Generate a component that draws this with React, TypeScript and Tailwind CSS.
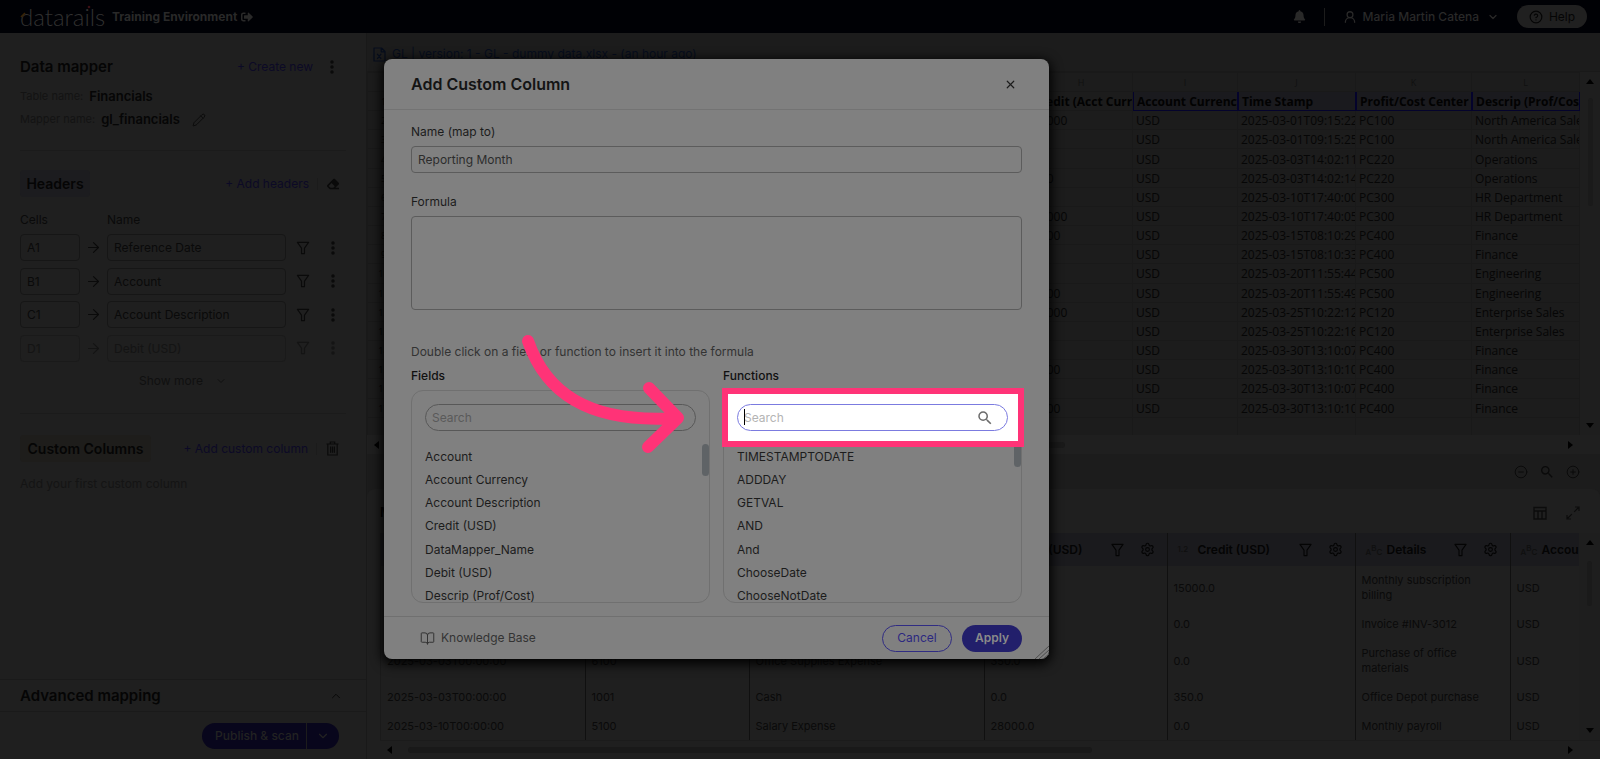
import React from "react";
import {
  ArrowRight,
  BookOpen,
  ChevronDown,
  ChevronUp,
  CircleHelp,
  CircleMinus,
  CirclePlus,
  Pencil,
  Settings,
  UserRound,
  X,
} from "lucide-react";
import { FaBell, FaEraser, FaSignOutAlt } from "react-icons/fa";
import { MdMoreVert, MdSearch } from "react-icons/md";

function Funnel({ className }: { className: string }) {
  return (
    <svg viewBox="0 0 14 15" className={className} fill="none" stroke="currentColor" strokeWidth="1.2" strokeLinejoin="round" aria-hidden="true">
      <path d="M1 1.5h12L8.6 7.6v5.9H5.4V7.6z" />
    </svg>
  );
}

function TrashCan() {
  return (
    <svg viewBox="0 0 13 15" className="h-[15px] w-[13px]" fill="none" stroke="currentColor" strokeWidth="1.2" aria-hidden="true">
      <path d="M.5 3h12M4.3 2.8V1h4.4v1.8M1.8 3v11h9.4V3M4.6 5.5v6.2M6.5 5.5v6.2M8.4 5.5v6.2" />
    </svg>
  );
}

function GridIcon() {
  return (
    <svg viewBox="0 0 14 14" className="size-3.5" fill="none" stroke="currentColor" strokeWidth="1.3" aria-hidden="true">
      <path d="M1 1.5h12v11.5H1zM1 5h12M5 5v8M9 5v8" />
    </svg>
  );
}

function ExpandIcon() {
  return (
    <svg viewBox="0 0 14 14" className="size-3.5" fill="none" stroke="currentColor" strokeWidth="1.2" aria-hidden="true">
      <path d="M9 1h4v4M13 1L8.2 5.8M5 13H1V9M1 13l4.8-4.8" />
    </svg>
  );
}

function ExcelFileIcon() {
  return (
    <svg viewBox="0 0 13 15" className="h-[15px] w-[13px]" fill="none" stroke="currentColor" strokeWidth="1.2" strokeLinejoin="round" aria-hidden="true">
      <path d="M1 1h7.5L12 4.5V14H1zM8.2 1v3.8H12M4.2 6.8l4 5M8.2 6.8l-4 5" />
    </svg>
  );
}

function Triangle({ dir }: { dir: "up" | "down" | "left" | "right" }) {
  const shapes = {
    up: "M0 6h8L4 1z",
    down: "M0 2h8L4 7z",
    left: "M6 0v8L1 4z",
    right: "M2 0v8l5-4z",
  };
  return (
    <svg viewBox="0 0 8 8" className="size-2 text-black" fill="currentColor" aria-hidden="true">
      <path d={shapes[dir]} />
    </svg>
  );
}

function TopBar() {
  return (
    <header className="flex h-[33px] shrink-0 items-center bg-[#000105] pl-5 pr-[13px] text-[#292929]">
      <div className="relative flex h-[33px] w-[84px] items-center">
        <span className="font-['Lato'] text-2xl font-light leading-[33px] text-[#303030]">datarails</span>
        <svg viewBox="0 0 84 33" className="absolute inset-0 h-[33px] w-[84px]" fill="none" aria-hidden="true">
          <path d="M1 17l4-4" stroke="#3a2405" strokeWidth="1.6" />
          <circle cx="69" cy="7" r="1.3" fill="#3a0f14" />
        </svg>
      </div>
      <a href="#environment" className="ml-2 flex items-center gap-1 text-xs font-bold">
        Training Environment
        <FaSignOutAlt className="size-3" />
      </a>
      <div className="ml-auto flex items-center">
        <button type="button" aria-label="Notifications">
          <FaBell className="size-[13px]" />
        </button>
        <span className="ml-[18px] h-[18px] w-px bg-[#1c1c1c]" />
        <button type="button" className="ml-[18px] flex items-center text-xs font-medium">
          <UserRound className="size-3.5" strokeWidth={2.2} />
          <span className="ml-1.5">Maria Martin Catena</span>
          <ChevronDown className="ml-2 size-3" strokeWidth={2.5} />
        </button>
        <button type="button" className="ml-[18px] flex h-[23px] w-[70px] items-center justify-center gap-1.5 rounded-full bg-[#202020] text-xs text-[#050505]">
          <CircleHelp className="size-3.5" />
          Help
        </button>
      </div>
    </header>
  );
}

const headerRows = [
  ["A1", "Reference Date"],
  ["B1", "Account"],
  ["C1", "Account Description"],
  ["D1", "Debit (USD)"],
];

function Sidebar() {
  return (
    <aside className="flex w-[367px] shrink-0 flex-col border-r border-[#191919] bg-[#1f1f1f] text-xs text-[#0a0a0a]">
      <div className="flex flex-col px-5">
        <div className="mt-[22px] flex h-6 items-center">
          <h1 className="text-[15px] font-semibold text-[#050505]">Data mapper</h1>
          <button type="button" className="ml-auto text-[#0c0a26]">+ Create new</button>
          <button type="button" aria-label="Mapper options" className="ml-[9px] mr-1">
            <MdMoreVert className="size-5" />
          </button>
        </div>
        <p className="mt-1.5 flex h-[23px] items-center gap-1.5 text-[11px] text-[#131313]">
          Table name: <b className="text-[13px] font-semibold text-[#060606]">Financials</b>
        </p>
        <p className="flex h-[23px] items-center gap-1.5 text-[11px] text-[#131313]">
          Mapper name: <b className="text-[13px] font-semibold text-[#060606]">gl_financials</b>
          <button type="button" aria-label="Rename mapper" className="ml-1.5 text-[#090909]">
            <Pencil className="size-3.5" strokeWidth={1.5} />
          </button>
        </p>
        <hr className="mt-[19px] border-[#1b1b1b]" />

        <div className="mt-[19px] flex h-[27px] items-center">
          <h2 className="flex h-[27px] w-[70px] items-center justify-center rounded bg-[#1c1c1f] text-sm font-semibold text-[#050505]">
            Headers
          </h2>
          <button type="button" className="ml-auto text-[#0c0a26]">+ Add headers</button>
          <span className="ml-2 h-3 w-px bg-[#1b1b1b]" />
          <button type="button" aria-label="Clear headers" className="ml-[9px] mr-[7px]">
            <FaEraser className="size-3" />
          </button>
        </div>
        <div className="mt-3 flex h-[22px] items-center">
          <span className="w-[87px]">Cells</span>
          <span>Name</span>
        </div>
        <ul className="flex h-[134px] flex-col">
          {headerRows.map(([cell, name], i) => (
            <li key={cell} className={i === 3 ? "flex flex-1 items-center opacity-50" : "flex flex-1 items-center"}>
              <input aria-label={`Cell ${cell}`} defaultValue={cell} className="h-[27px] w-[60px] rounded border border-[#161616] px-1.5" />
              <ArrowRight className="mx-[5px] size-[17px]" strokeWidth={1.6} />
              <input aria-label={`Name for ${cell}`} defaultValue={name} className="h-[27px] w-[179px] rounded border border-[#161616] px-1.5" />
              <button type="button" aria-label={`Filter ${name}`} className="ml-2.5">
                <Funnel className="h-3.5 w-3.5" />
              </button>
              <button type="button" aria-label={`Options for ${name}`} className="ml-[13px]">
                <MdMoreVert className="size-5" />
              </button>
            </li>
          ))}
        </ul>
        <button type="button" className="mt-1 flex h-6 items-center justify-center gap-3 text-[#101010]">
          Show more
          <ChevronDown className="size-3" />
        </button>
        <hr className="mt-5 border-[#1b1b1b]" />

        <div className="mt-[21px] flex h-[27px] items-center">
          <h2 className="flex h-[27px] w-[131px] items-center justify-center rounded bg-[#1e1d1b] text-sm font-semibold text-[#050505]">
            Custom Columns
          </h2>
          <button type="button" className="ml-auto text-[#0c0a26]">+ Add custom column</button>
          <span className="ml-2 h-3 w-px bg-[#1b1b1b]" />
          <button type="button" aria-label="Delete custom columns" className="ml-[9px] mr-[7px]">
            <TrashCan />
          </button>
        </div>
        <p className="mt-3.5 text-[#141414]">Add your first custom column</p>
      </div>

      <div className="mt-auto">
        <button type="button" className="flex h-[33px] w-full items-center justify-between border-y border-[#1a1a1a] pl-5 pr-[23px] text-[15px] font-semibold text-[#050505]">
          Advanced mapping
          <ChevronUp className="size-3.5" strokeWidth={1.5} />
        </button>
        <div className="flex h-[47px] items-center justify-end pr-[27px]">
          <div className="flex h-[26px] overflow-hidden rounded-full bg-[#08061c] font-medium text-[#222]">
            <button type="button" className="w-[105px] border-r border-[#1c1c1c] pl-1.5">Publish &amp; scan</button>
            <button type="button" aria-label="Publish options" className="flex w-8 items-center justify-center">
              <ChevronDown className="size-3.5" />
            </button>
          </div>
        </div>
      </div>
    </aside>
  );
}

const letters = ["A", "B", "C", "D", "E", "F", "G", "H", "I", "J", "K", "L"];

const sheetHeads = ["Account Currency", "Time Stamp", "Profit/Cost Center", "Descrip (Prof/Cost)"];

const sheetRows = [
  ["15000", "2025-03-01T09:15:22", "PC100", "North America Sales"],
  ["", "2025-03-01T09:15:25", "PC100", "North America Sales"],
  ["", "2025-03-03T14:02:11", "PC220", "Operations"],
  ["350", "2025-03-03T14:02:14", "PC220", "Operations"],
  ["", "2025-03-10T17:40:00", "PC300", "HR Department"],
  ["28000", "2025-03-10T17:40:05", "PC300", "HR Department"],
  ["1200", "2025-03-15T08:10:29", "PC400", "Finance"],
  ["", "2025-03-15T08:10:33", "PC400", "Finance"],
  ["", "2025-03-20T11:55:44", "PC500", "Engineering"],
  ["2400", "2025-03-20T11:55:49", "PC500", "Engineering"],
  ["18000", "2025-03-25T10:22:12", "PC120", "Enterprise Sales"],
  ["", "2025-03-25T10:22:16", "PC120", "Enterprise Sales"],
  ["", "2025-03-30T13:10:07", "PC400", "Finance"],
  ["1500", "2025-03-30T13:10:10", "PC400", "Finance"],
  ["", "2025-03-30T13:10:07", "PC400", "Finance"],
  ["1500", "2025-03-30T13:10:10", "PC400", "Finance"],
];

function Spreadsheet() {
  const cell = "overflow-hidden whitespace-nowrap border border-[#191919] px-[3px] pb-0 pt-0.5 leading-4";
  return (
    <div className="flex h-[383px] shrink-0 flex-col border-t border-[#191919]">
      <div className="flex min-h-0 flex-1">
        <div className="min-w-0 flex-1 overflow-hidden">
          <table className="h-[365px] w-[1213px] table-fixed border-collapse font-['Open_Sans','Noto_Sans',sans-serif] text-xs text-[#060606]">
            <colgroup>
              <col className="w-8" />
              {letters.slice(0, 7).map((l) => (
                <col key={l} className="w-[90px]" />
              ))}
              <col className="w-[103px]" />
              <col className="w-[105px]" />
              <col className="w-[118px]" />
              <col className="w-[116px]" />
              <col />
            </colgroup>
            <thead>
              <tr className="h-[19px] text-center text-[9px] text-[#101010]">
                <td className={cell} />
                {letters.map((l) => (
                  <td key={l} className={cell}>{l}</td>
                ))}
              </tr>
            </thead>
            <tbody>
              <tr className="h-[19px] text-left font-bold text-[#020202]">
                <td className={`${cell} text-center text-[9px] font-normal`}>1</td>
                {letters.slice(0, 7).map((l) => (
                  <td key={l} className={cell} />
                ))}
                <th className={cell}>Credit (Acct Currency)</th>
                {sheetHeads.map((h) => (
                  <th key={h} className="overflow-hidden whitespace-nowrap border border-[#04032c] bg-[#1a1a1e] px-1 pb-0 pt-0.5 leading-4 shadow-[inset_1px_0_0_0_#04032c]">{h}</th>
                ))}
              </tr>
              {sheetRows.map((r, i) => (
                <tr key={i} className="h-[19px]">
                  <td className={`${cell} text-center text-[9px]`}>{i + 2}</td>
                  {letters.slice(0, 7).map((l) => (
                    <td key={l} className={cell} />
                  ))}
                  <td className={cell}>{r[0]}</td>
                  <td className={cell}>USD</td>
                  <td className={cell}>{r[1]}</td>
                  <td className={cell}>{r[2]}</td>
                  <td className={cell}>{r[3]}</td>
                </tr>
              ))}
              <tr className="h-[19px]">
                <td className={cell} />
                {letters.map((l) => (
                  <td key={l} className={cell} />
                ))}
              </tr>
            </tbody>
          </table>
        </div>
        <div className="flex w-5 shrink-0 flex-col items-center bg-[#1e1e1e] text-black">
          <span className="flex h-5 items-center"><Triangle dir="up" /></span>
          <span className="mt-1.5 h-[108px] w-[5px] rounded-full bg-[#1a1a1a]" />
          <span className="mt-auto flex h-5 items-center"><Triangle dir="down" /></span>
        </div>
      </div>
      <div className="flex h-[19px] items-center bg-[#1f1f1f] pl-1.5 pr-[26px]">
        <Triangle dir="left" />
        <span className="ml-2.5 h-1.5 w-[674px] rounded-full bg-[#1a1a1a]" />
        <span className="ml-auto"><Triangle dir="right" /></span>
      </div>
    </div>
  );
}

const previewHeads = [
  ["ABC", "Reference Date"],
  ["ABC", "Account"],
  ["ABC", "Account Description"],
  ["1.2", "Debit (USD)"],
  ["1.2", "Credit (USD)"],
  ["ABC", "Details"],
  ["ABC", "Account Currency"],
];

const previewRows = [
  ["2025-03-01T00:00:00", "4000", "Revenue", "0.0", "15000.0", "Monthly subscription billing"],
  ["2025-03-01T00:00:00", "1100", "Accounts Receivable", "15000.0", "0.0", "Invoice #INV-3012"],
  ["2025-03-03T00:00:00", "6100", "Office Supplies Expense", "350.0", "0.0", "Purchase of office materials"],
  ["2025-03-03T00:00:00", "1001", "Cash", "0.0", "350.0", "Office Depot purchase"],
  ["2025-03-10T00:00:00", "5100", "Salary Expense", "28000.0", "0.0", "Monthly payroll"],
];

function Preview() {
  return (
    <section className="flex min-h-0 flex-1 flex-col rounded-t-lg bg-[#1f1f1f]">
      <div className="flex h-11 shrink-0 items-center pl-[13px] pr-5 pt-1 text-[#0c0c0c]">
        <h2 className="text-[13px] font-semibold text-black">Mapped data</h2>
        <button type="button" aria-label="Table view" className="ml-auto"><GridIcon /></button>
        <button type="button" aria-label="Expand" className="ml-[19px]"><ExpandIcon /></button>
      </div>
      <div className="ml-[13px] flex min-h-0 flex-1">
        <div className="min-w-0 flex-1 overflow-hidden border-l border-[#1a1a1a]">
          <table className="w-[1310px] table-fixed border-collapse text-[11px] text-[#0a0a0a]">
            <colgroup>
              <col className="w-[204px]" />
              <col className="w-[164px]" />
              <col className="w-[235px]" />
              <col className="w-[183px]" />
              <col className="w-[188px]" />
              <col className="w-[155px]" />
              <col className="w-[181px]" />
            </colgroup>
            <thead>
              <tr className="h-[33px] bg-[#1a1a1d]">
                {previewHeads.map(([kind, title]) => (
                  <th key={title} className="border-r border-[#101010] p-0 pl-2.5 pr-3 text-left text-xs font-semibold text-[#040404]">
                    <div className="flex items-center">
                      {kind === "ABC" ? (
                        <span className="flex w-[21px] shrink-0 text-[8px] font-medium leading-3 text-[#0f0f0f]">
                          <span className="pt-1">A</span>
                          <span>B</span>
                          <span className="pt-1">C</span>
                        </span>
                      ) : (
                        <span className="w-5 shrink-0 text-[8px] font-medium text-[#0f0f0f]">1.2</span>
                      )}
                      <span className="shrink-0 whitespace-nowrap">{title}</span>
                      <Funnel className="ml-auto h-3.5 w-[13px] shrink-0" />
                      <Settings className="ml-4 size-[15px] shrink-0" strokeWidth={1.8} />
                    </div>
                  </th>
                ))}
              </tr>
            </thead>
            <tbody>
              {previewRows.map((r, i) => (
                <tr key={i} className={i === 0 || i === 2 ? "h-11" : "h-[29px]"}>
                  {[...r, "USD"].map((v, j) => (
                    <td key={j} className="border-r border-[#101010] py-0 pl-1.5 pr-5 align-middle leading-[15px]">{v}</td>
                  ))}
                </tr>
              ))}
            </tbody>
          </table>
        </div>
        <div className="flex w-[21px] shrink-0 flex-col items-center bg-[#1e1e1e]">
          <span className="flex h-5 items-center"><Triangle dir="up" /></span>
          <span className="mt-2 h-[45px] w-[5px] rounded-full bg-[#1a1a1a]" />
          <span className="mt-auto flex h-5 items-center"><Triangle dir="down" /></span>
        </div>
      </div>
      <div className="ml-[13px] flex h-[19px] shrink-0 items-center border-t border-[#1b1b1b] pl-1.5 pr-[26px]">
        <Triangle dir="left" />
        <span className="ml-[14px] h-1.5 w-[684px] rounded-full bg-[#191919]" />
        <span className="ml-auto"><Triangle dir="right" /></span>
      </div>
    </section>
  );
}

const fields = ["Account", "Account Currency", "Account Description", "Credit (USD)", "DataMapper_Name", "Debit (USD)", "Descrip (Prof/Cost)"];
const functions = ["TIMESTAMPTODATE", "ADDDAY", "GETVAL", "AND", "And", "ChooseDate", "ChooseNotDate"];

function PickList({ title, items, lit }: { title: string; items: string[]; lit?: boolean }) {
  return (
    <div className="flex flex-1 flex-col">
      <h3 className="h-[26px] font-medium leading-6 text-[#101010]">{title}</h3>
      <div className="relative h-[213px] rounded-xl border border-[#707070] px-[13px]">
        {lit && <div className="absolute -left-0.5 -right-[3px] -top-[3px] h-[59px] border-[6px] border-[#ff3377] bg-white" />}
        <div className="relative mt-[13px]">
          <input
            type="search"
            aria-label={`Search ${title.toLowerCase()}`}
            placeholder="Search"
            className={
              lit
                ? "block h-[27px] w-full rounded-full border border-[#7b7be0] bg-white px-1.5 outline-none placeholder:text-[#b4b4b4]"
                : "block h-[27px] w-full rounded-full border border-[#585858] px-1.5 outline-none placeholder:text-[#5a5a5a]"
            }
          />
          {lit && <span className="absolute left-[7px] top-[5px] h-4 w-px bg-black" />}
          {lit && <MdSearch className="absolute right-[14px] top-[5px] size-[18px] text-[#6b6b6b]" />}
        </div>
        <div className="mt-[14px] h-[157px] overflow-hidden">
          <ul className="grid h-[163px] auto-rows-fr items-center">
            {items.map((item) => (
              <li key={item}>{item}</li>
            ))}
          </ul>
        </div>
        <span
          className={
            lit
              ? "absolute right-0 top-[56px] h-5 w-[7px] rounded-b-full bg-[#5f6366]"
              : "absolute right-0 top-[53px] h-8 w-[7px] rounded-full bg-[#5f6366]"
          }
        />
      </div>
    </div>
  );
}

function CustomColumnDialog() {
  return (
    <div
      role="dialog"
      aria-labelledby="dialog-title"
      className="absolute left-[384px] top-[59px] flex w-[665px] flex-col rounded-lg bg-[#808080] text-xs text-[#1c1c1c] shadow-[0_3px_12px_2px_#000000]"
    >
      <div className="flex h-[51px] items-center border-b border-[#737373] pl-[27px] pr-8">
        <h2 id="dialog-title" className="text-base font-semibold text-[#141414]">Add Custom Column</h2>
        <button type="button" aria-label="Close" className="ml-auto">
          <X className="size-[13px]" strokeWidth={2.2} />
        </button>
      </div>
      <div className="flex flex-col px-[27px]">
        <label htmlFor="column-name" className="mt-2.5 h-[26px] leading-6">Name (map to)</label>
        <input id="column-name" defaultValue="Reporting Month" className="h-[27px] rounded border border-[#5c5c5c] px-1.5 text-[#2c2c2c] outline-none" />
        <label htmlFor="column-formula" className="mt-[17px] h-[26px] leading-6">Formula</label>
        <textarea id="column-formula" className="h-[94px] resize-none rounded border border-[#5c5c5c] px-1.5 outline-none" />
        <p className="mt-[30px] h-6 leading-6 text-[#333]">Double click on a field or function to insert it into the formula</p>
        <div className="flex gap-[13px]">
          <PickList title="Fields" items={fields} />
          <PickList title="Functions" items={functions} lit />
        </div>
      </div>
      <div className="mt-[13px] flex h-[43px] items-center border-t border-[#707070] px-[27px]">
        <a href="#knowledge-base" className="ml-[9px] flex items-center gap-1.5 text-[#333]">
          <BookOpen className="size-[15px]" strokeWidth={1.6} />
          Knowledge Base
        </a>
        <button type="button" className="ml-auto h-[27px] w-[70px] rounded-full border border-[#302c83] text-[#2c2880]">Cancel</button>
        <button type="button" className="ml-2.5 h-[27px] w-[60px] rounded-full bg-[#221f6b] font-semibold text-[#8a8a8a]">Apply</button>
      </div>
      <svg viewBox="0 0 14 14" className="absolute bottom-0 right-0 size-3.5" stroke="#4c4c4c" fill="none" aria-hidden="true">
        <path d="M0 14L14 1M4 14L14 5M8 14L14 9" />
      </svg>
    </div>
  );
}

export default function App() {
  return (
    <div className="relative flex h-screen flex-col overflow-hidden bg-[#1c1c1c] font-['Inter',sans-serif]">
      <TopBar />
      <div className="flex min-h-0 flex-1">
        <Sidebar />
        <main className="flex min-w-0 flex-1 flex-col">
          <div className="flex h-[38px] shrink-0 items-center pl-1.5 pt-1">
            <a href="#file" className="flex items-center gap-1.5 text-xs text-[#060d1c]">
              <ExcelFileIcon />
              GL | version: 1 - GL - dummy data.xlsx - (an hour ago)
            </a>
          </div>
          <Spreadsheet />
          <div className="flex h-[35px] shrink-0 items-center justify-end gap-[11px] pr-5 text-[#0a0a0a]">
            <button type="button" aria-label="Zoom out"><CircleMinus className="size-3.5" strokeWidth={1.6} /></button>
            <button type="button" aria-label="Search sheet"><MdSearch className="size-4" /></button>
            <button type="button" aria-label="Zoom in"><CirclePlus className="size-3.5" strokeWidth={1.6} /></button>
          </div>
          <Preview />
        </main>
      </div>
      <CustomColumnDialog />
      <svg viewBox="0 0 180 130" className="pointer-events-none absolute left-[514px] top-[330px] h-[130px] w-[180px]" fill="none" stroke="#ff3377" strokeWidth="12" strokeLinecap="round" strokeLinejoin="round" aria-hidden="true">
        <path d="M14 11C31 60 71 94 163 88M135 58l29 30-30 29" />
      </svg>
    </div>
  );
}
